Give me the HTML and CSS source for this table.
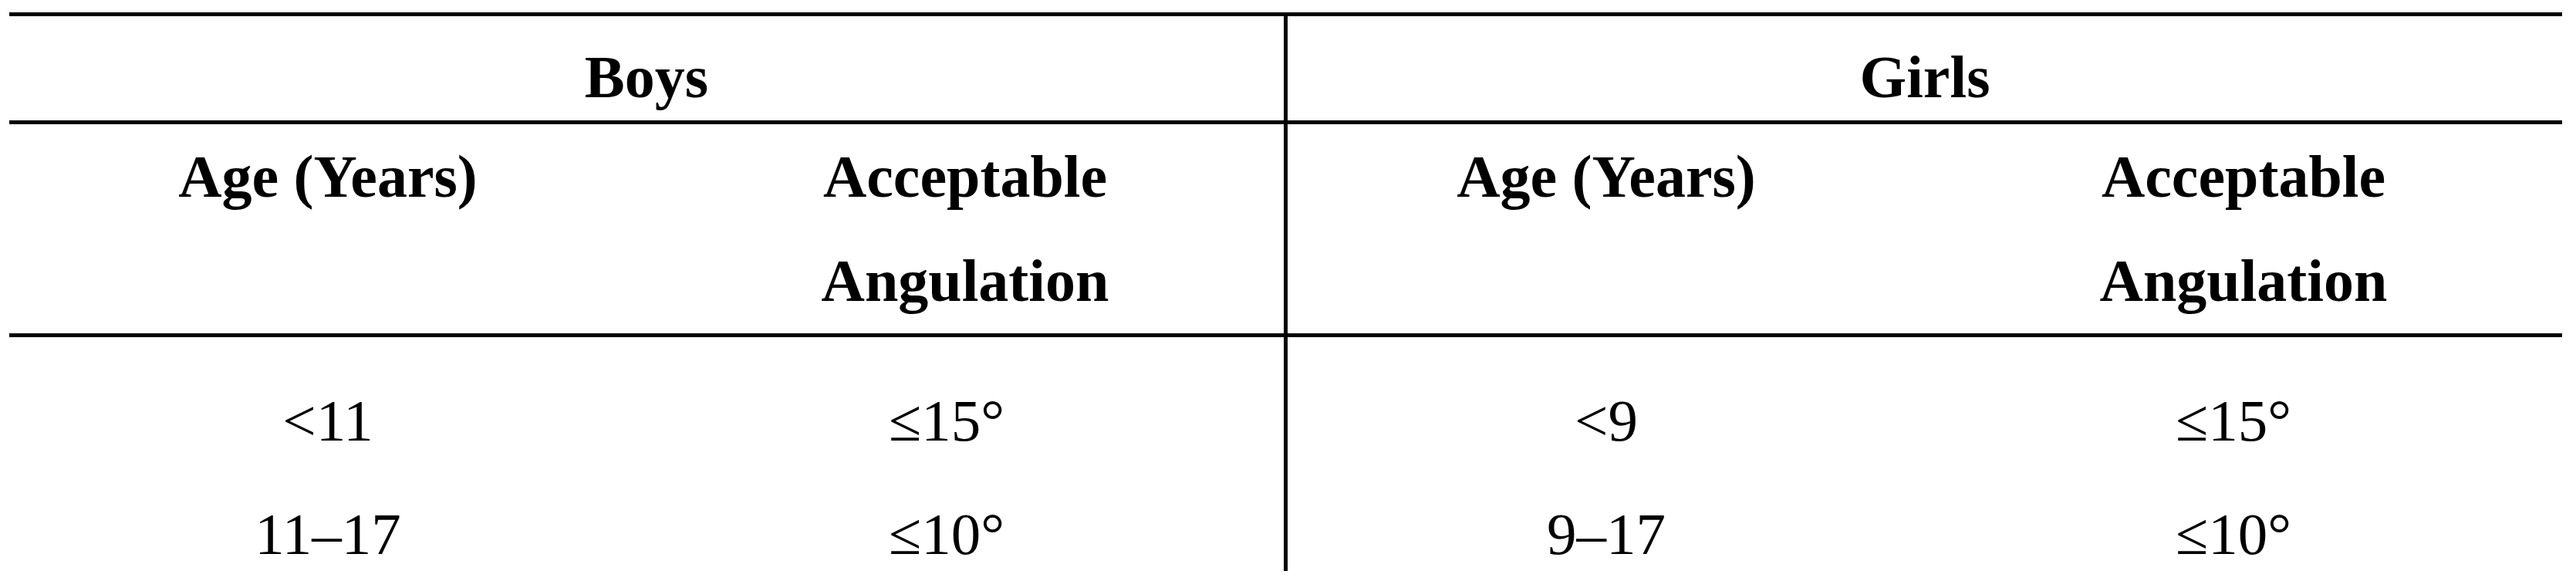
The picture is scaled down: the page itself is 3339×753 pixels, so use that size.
FILE: index.html
```html
<!DOCTYPE html>
<html lang="en">
<head>
<meta charset="utf-8">
<title>Acceptable angulation by age</title>
<link rel="stylesheet" href="styles.css">
</head>
<body>
<table class="grid">
  <colgroup>
    <col class="c1">
    <col class="c2">
    <col class="c3">
    <col class="c4">
  </colgroup>
  <thead>
    <tr class="group-row">
      <th colspan="2" class="split">Boys</th>
      <th colspan="2">Girls</th>
    </tr>
    <tr class="sub-row">
      <th>Age (Years)</th>
      <th class="split">Acceptable<br>Angulation</th>
      <th>Age (Years)</th>
      <th>Acceptable<br>Angulation</th>
    </tr>
  </thead>
  <tbody>
    <tr class="row-first">
      <td>&lt;11</td>
      <td class="split angle">≤15°</td>
      <td>&lt;9</td>
      <td class="angle angle-r">≤15°</td>
    </tr>
    <tr class="row-last">
      <td>11–17</td>
      <td class="split angle">≤10°</td>
      <td>9–17</td>
      <td class="angle angle-r">≤10°</td>
    </tr>
  </tbody>
</table>
</body>
</html>
```
FILE: styles.css
```css
html, body {
  background: #ffffff;
}
body {
  margin: 16px 18px 0 12px;
  font-family: "Liberation Serif", "Times New Roman", serif;
  color: #000000;
}
.grid {
  width: 3309px;
  table-layout: fixed;
  border-collapse: separate;
  border-spacing: 0;
  border-top: 5px solid #000;
}
.c1, .c3, .c4 { width: 826px; }
.c2 { width: 831px; }
th, td {
  padding: 0;
  text-align: center;
  vertical-align: top;
}
th {
  font-weight: bold;
  font-size: 78px;
}
td {
  font-size: 77px;
  font-weight: normal;
}
.split {
  border-right: 5px solid #000;
}
.group-row th {
  padding: 24px 0 1px;
  line-height: 110px;
  border-bottom: 5px solid #000;
}
.sub-row th {
  padding: 0 0 1px;
  line-height: 135px;
  border-bottom: 5px solid #000;
}
.row-first td {
  padding-top: 68px;
  padding-bottom: 33px;
  line-height: 80px;
}
.row-last td {
  padding-top: 34px;
  padding-bottom: 8px;
  line-height: 80px;
}
.angle {
  padding-right: 48px;
}
.angle-r {
  padding-right: 26px;
}
```
